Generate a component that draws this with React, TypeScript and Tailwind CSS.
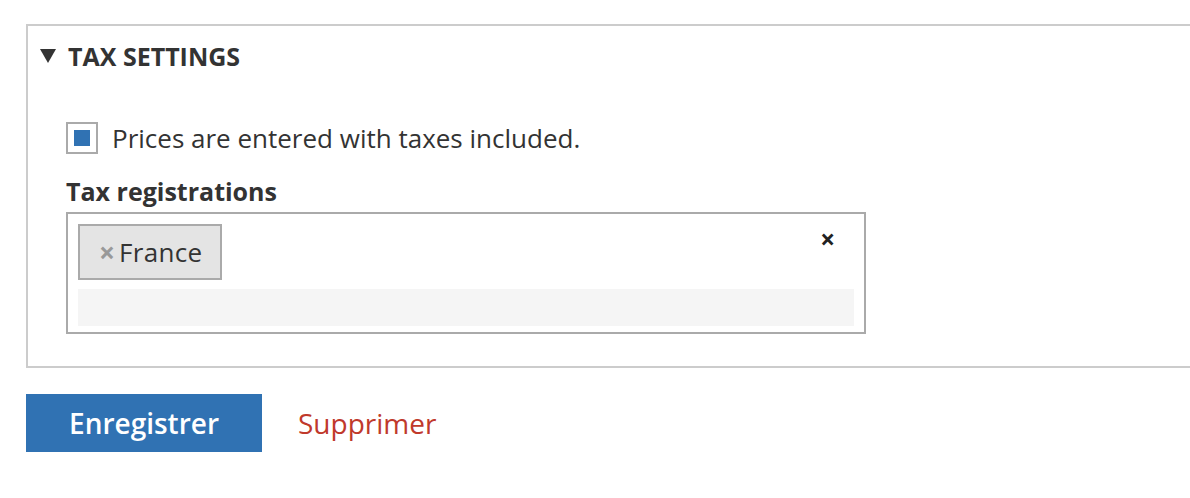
const font = { fontFamily: '"Open Sans", "Noto Sans", sans-serif' };

const App = () => {
  return (
    <div className="w-[1190px] h-[498px] overflow-hidden bg-white text-[#333]" style={font}>
      <div className="pt-[24px] pl-[26px]">
        {/* Tax settings panel */}
        <section className="w-[1200px] border-2 border-r-0 border-[#cccccc] pb-[32px]">
          <div className="flex items-center pt-[14px] pl-[12px]">
            <span className="w-0 h-0 border-l-[8px] border-r-[8px] border-t-[14px] border-l-transparent border-r-transparent border-t-[#333] mr-[12px]" />
            <h2 className="text-[25px] leading-[32px] font-bold">TAX SETTINGS</h2>
          </div>

          <div className="pl-[38px] pt-[50px]">
            <label className="flex items-center gap-[14px]">
              <span className="w-[32px] h-[32px] border-2 border-[#aaaaaa] flex items-center justify-center bg-white">
                <span className="w-[16px] h-[16px] bg-[#3072b3]" />
              </span>
              <span className="text-[26px] leading-[32px]">Prices are entered with taxes included.</span>
            </label>

            <div className="mt-[21px] text-[25px] leading-[32px] font-bold">Tax registrations</div>

            <div className="relative mt-[5px] w-[800px] border-2 border-[#aaaaaa] p-[10px] pb-[6px]">
              <div className="flex">
                <span className="flex items-center h-[56px] w-[144px] border-2 border-[#aaaaaa] bg-[#e4e4e4] pl-[19px]">
                  <span className="text-[28px] leading-none font-bold text-[#999] mr-[4px]">×</span>
                  <span className="text-[26px] leading-[32px] tracking-[0.3px]">France</span>
                </span>
              </div>
              <div className="mt-[9px] h-[37px] bg-[#f5f5f5]" />
              <span className="absolute top-[12px] right-[29px] text-[26px] leading-none font-bold text-[#222]">×</span>
            </div>
          </div>
        </section>

        {/* Actions */}
        <div className="flex items-center gap-[36px] mt-[26px]">
          <button className="w-[236px] h-[58px] bg-[#3072b3] text-white text-[28px] font-semibold">Enregistrer</button>
          <a className="text-[28px] text-[#c0392b]">Supprimer</a>
        </div>
      </div>
    </div>
  );
};

export default App;
